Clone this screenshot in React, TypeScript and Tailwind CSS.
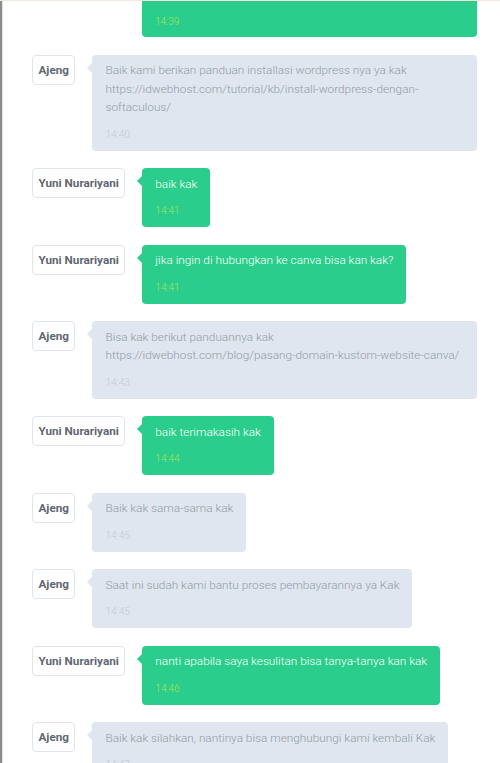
import React from "react";

type Msg = { who: "a" | "y"; text: string; time: string };

const msgs: Msg[] = [
  { who: "a", text: "Baik kami berikan panduan installasi wordpress nya ya kak https://idwebhost.com/tutorial/kb/install-wordpress-dengan-softaculous/", time: "14:40" },
  { who: "y", text: "baik kak", time: "14:41" },
  { who: "y", text: "jika ingin di hubungkan ke canva bisa kan kak?", time: "14:41" },
  { who: "a", text: "Bisa kak berikut panduannya kak https://idwebhost.com/blog/pasang-domain-kustom-website-canva/", time: "14:43" },
  { who: "y", text: "baik terimakasih kak", time: "14:44" },
  { who: "a", text: "Baik kak sama-sama kak", time: "14:45" },
  { who: "a", text: "Saat ini sudah kami bantu proses pembayarannya ya Kak", time: "14:45" },
  { who: "y", text: "nanti apabila saya kesulitan bisa tanya-tanya kan kak", time: "14:46" },
  { who: "a", text: "Baik kak silahkan, nantinya bisa menghubungi kami kembali Kak", time: "14:47" },
];

function Bubble({ who, text, time }: { who: "a" | "y"; text: string; time: string }) {
  const green = who === "y";
  return (
    <div
      className={
        "relative min-w-0 max-w-full rounded-[4px] pl-[13px] pr-[13px] pt-[6.5px] pb-[6px] " +
        (green ? "bg-[#2acd8b]" : "bg-[#dfe6ef]")
      }
    >
      <span
        className={
          "absolute left-[-5px] top-[8px] h-0 w-0 border-y-[5px] border-r-[5px] border-y-transparent " +
          (green ? "border-r-[#2acd8b]" : "border-r-[#dfe6ef]")
        }
      />
      <div
        className={
          "text-[11.8px] leading-[18.5px] font-light break-words " +
          (green ? "text-white" : "text-[#949ba6]")
        }
      >
        {text}
      </div>
      <div
        className={
          "mt-[8px] text-[10px] leading-[20px] font-light " +
          (green ? "text-[#a9e35a]" : "text-[#c3cad4]")
        }
      >
        {time}
      </div>
    </div>
  );
}

function Row({ m }: { m: Msg }) {
  return (
    <div className="flex shrink-0 items-start">
      <div className="mr-[17px] shrink-0 rounded-[4px] border border-[#dfe5ec] bg-white px-[5.5px] py-[5px] text-[11.7px] font-bold leading-[18px] text-[#5f6673]">
        {m.who === "a" ? "Ajeng" : "Yuni Nurariyani"}
      </div>
      <div className="flex min-w-0 flex-1">
        <Bubble who={m.who} text={m.text} time={m.time} />
      </div>
    </div>
  );
}

export default function App() {
  return (
    <div
      className="h-[763px] w-[500px] overflow-hidden bg-white"
      style={{ fontFamily: "Roboto, 'Liberation Sans', sans-serif" }}
    >
      <div className="h-px bg-[#f6e6dc]" />
      <div className="flex h-full">
        <div className="w-[2px] shrink-0 bg-[#8d8d8d]" />
        <div className="w-px shrink-0 bg-[#e2e2e2]" />
        <div className="flex min-w-0 flex-1 flex-col gap-[17.5px] pl-[29px] pr-[23px]">
          <div className="flex h-[36px] shrink-0 flex-col justify-end overflow-hidden">
            <div className="flex shrink-0 items-end">
              <div className="mr-[17px] w-[93px] shrink-0" />
              <div className="flex min-w-0 flex-1">
                <div className="w-full rounded-[4px] bg-[#2acd8b] pl-[13px] pr-[13px] pt-[6.5px] pb-[5px]">
                  <div className="text-[11.8px] font-light leading-[18.5px] text-white">
                    Baik kak terimakasih
                  </div>
                  <div className="mt-[8px] text-[10px] font-light leading-[20px] text-[#a9e35a]">14:39</div>
                </div>
              </div>
            </div>
          </div>
          {msgs.map((m, i) => (
            <Row key={i} m={m} />
          ))}
        </div>
      </div>
    </div>
  );
}
